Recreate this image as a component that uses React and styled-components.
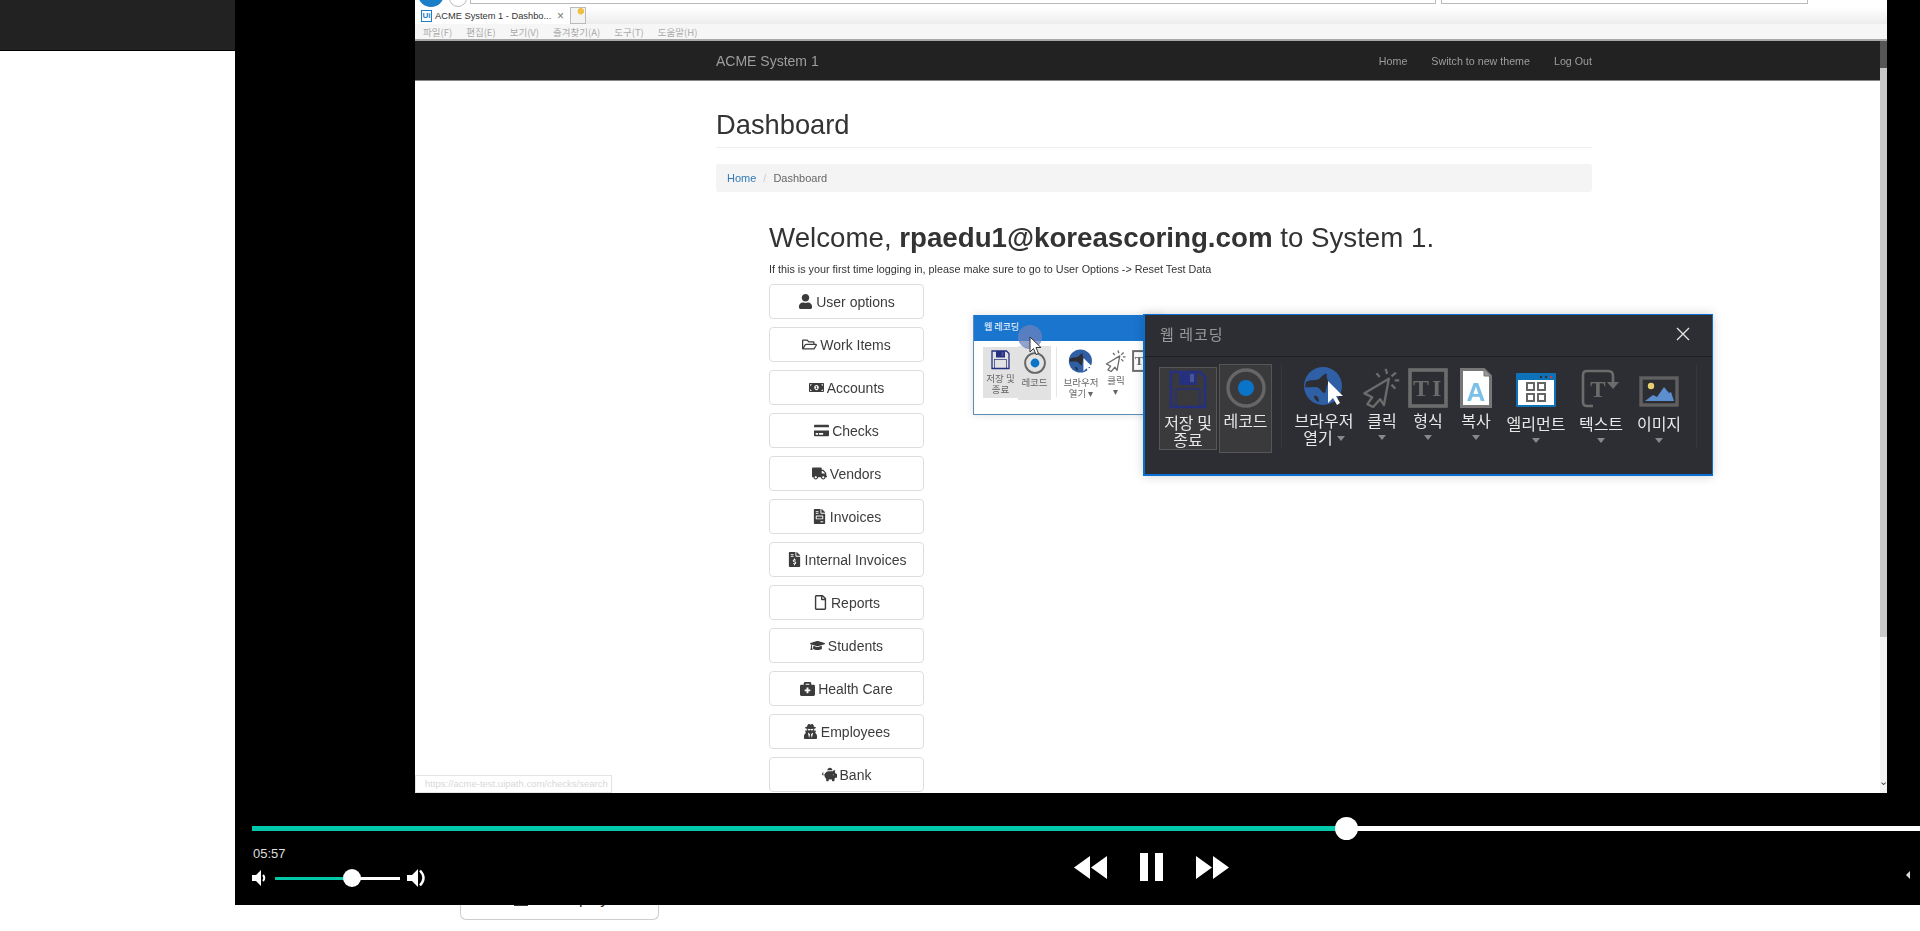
import React from 'react';
import styled, { createGlobalStyle } from 'styled-components';
import {
  FaUser, FaRegFolderOpen, FaMoneyBillAlt, FaCreditCard, FaTruck, FaFileInvoice,
  FaFileInvoiceDollar, FaRegFile, FaGraduationCap, FaBriefcaseMedical, FaUserSecret, FaPiggyBank, FaTv,
} from 'react-icons/fa';

const KR = '"Noto Sans CJK KR", "Liberation Sans", sans-serif';

const GlobalStyle = createGlobalStyle`
  html, body { margin: 0; padding: 0; background: #fff; overflow: hidden; }
  body { font-family: "Liberation Sans", Arial, sans-serif; }
  * { box-sizing: border-box; }
`;

const menuLinks = ['Home', 'Switch to new theme', 'Log Out'];
const ieMenu = ['파일(F)', '편집(E)', '보기(V)', '즐겨찾기(A)', '도구(T)', '도움말(H)'];

const navButtons = [
  { label: 'User options', Icon: FaUser },
  { label: 'Work Items', Icon: FaRegFolderOpen },
  { label: 'Accounts', Icon: FaMoneyBillAlt },
  { label: 'Checks', Icon: FaCreditCard },
  { label: 'Vendors', Icon: FaTruck },
  { label: 'Invoices', Icon: FaFileInvoice },
  { label: 'Internal Invoices', Icon: FaFileInvoiceDollar },
  { label: 'Reports', Icon: FaRegFile },
  { label: 'Students', Icon: FaGraduationCap },
  { label: 'Health Care', Icon: FaBriefcaseMedical },
  { label: 'Employees', Icon: FaUserSecret },
  { label: 'Bank', Icon: FaPiggyBank },
];

/* ---------- ribbon drawings ---------- */

const SaveIcon = ({ size = 38 }) => (
  <svg width={size} height={size * 39 / 38} viewBox="0 0 38 39">
    <path d="M2 2H31L36 7V37H2Z" fill="none" stroke="#25307f" strokeWidth="2.6" />
    <rect x="10" y="2" width="18" height="13" fill="#25307f" />
    <rect x="21" y="4" width="4" height="8" fill="#4a5499" />
    <rect x="7" y="19" width="24" height="18" fill="none" stroke="#25307f" strokeWidth="1.4" />
  </svg>
);

const RecordIcon = ({ size = 40 }) => (
  <svg width={size} height={size} viewBox="0 0 40 40">
    <circle cx="20" cy="20" r="18" fill="none" stroke="#666" strokeWidth="3.4" />
    <circle cx="20" cy="20" r="8" fill="#0a74c8" />
  </svg>
);

const GlobeIcon = ({ size = 46 }) => (
  <svg width={size} height={size * 40 / 46} viewBox="0 0 46 40" style={{ overflow: 'visible' }}>
    <circle cx="22" cy="18" r="19" fill="#2f5fa5" />
    <path d="M5 14C10 11 14 13 18 11C21 9 23 5 26 6C25 10 27 12 28 15C25 17 26 21 24 25C21 25 20 21 17 19.500C13 18 9 20 4 19Z" fill="#2d2e33" />
    <path d="M13 28C16 27 18 30 18 34C15 33 13 31 13 28Z" fill="#2d2e33" />
    <path d="M27 13V35L32 30L36 37L39 35L35 28L42 28Z" fill="#fff" />
  </svg>
);

const ClickIcon = ({ size = 40 }) => (
  <svg width={size} height={size} viewBox="0 0 40 41" fill="none" stroke="#6b6b6b">
    <path d="M27 11L2 26L10 30L5 37L11 40L18 32L22 38Z" strokeWidth="2.4" strokeLinejoin="round" />
    <path d="M23.7 1L25.3 6M34.3 4.7L29.7 8.7M37.7 12.7H33M33.7 21.3L29.7 17M14.3 5.3L17.7 9.3" strokeWidth="2.4" />
  </svg>
);

const FormatIcon = ({ size = 40 }) => (
  <svg width={size} height={size} viewBox="0 0 40 40">
    <rect x="2" y="2" width="36" height="36" fill="none" stroke="#6c6c6c" strokeWidth="3.6" />
    <text x="5" y="28" fontFamily="Liberation Serif" fontWeight="700" fontSize="24" fill="#6c6c6c">T</text>
    <text x="24" y="28" fontFamily="Liberation Serif" fontWeight="700" fontSize="24" fill="#6c6c6c">I</text>
  </svg>
);

const CopyIcon = ({ width = 32, height = 40 }) => (
  <svg width={width} height={height} viewBox="0 0 32 40">
    <path d="M1.5 1.5H24L30.5 8V38.5H1.5Z" fill="#fff" stroke="#777" strokeWidth="3" />
    <path d="M24 1.5V8H30.5" fill="#999" stroke="#777" strokeWidth="1" />
    <text x="16" y="33" textAnchor="middle" fontFamily="Liberation Sans" fontWeight="700" fontSize="26" fill="#7cc0e8">A</text>
  </svg>
);

const ElementIcon = () => (
  <svg width="40" height="40" viewBox="0 0 40 40">
    <rect x="0" y="5" width="40" height="34" rx="1" fill="#0e72b8" />
    <rect x="2" y="12" width="36" height="25" fill="#fff" />
    <circle cx="25" cy="9" r="1.2" fill="#333" />
    <circle cx="30" cy="9" r="1.2" fill="#333" />
    <circle cx="35" cy="9" r="1.2" fill="#d43a3a" />
    <g fill="none" stroke="#666" strokeWidth="2">
      <rect x="11" y="15" width="7" height="7" />
      <rect x="22" y="15" width="7" height="7" />
      <rect x="11" y="26" width="7" height="7" />
      <rect x="22" y="26" width="7" height="7" />
    </g>
  </svg>
);

const TextIcon = () => (
  <svg width="40" height="40" viewBox="0 0 40 40">
    <path d="M12 38H6Q2 38 2 34V7Q2 3 6 3H27Q32 3 32 8V15" fill="none" stroke="#6c6c6c" strokeWidth="2.6" />
    <path d="M26 14H38L32 21Z" fill="#6c6c6c" />
    <text x="17" y="29" textAnchor="middle" fontFamily="Liberation Serif" fontWeight="700" fontSize="23" fill="#6c6c6c">T</text>
  </svg>
);

const ImageIcon = () => (
  <svg width="40" height="40" viewBox="0 0 40 40">
    <rect x="2" y="10" width="36" height="27" fill="none" stroke="#606060" strokeWidth="3.4" />
    <circle cx="12" cy="18" r="3.2" fill="#e8d070" />
    <path d="M6 33L14 27L18 29L25 19L30 25L32 24L35 33Z" fill="#5b8fd0" />
  </svg>
);

/* ---------- player drawings ---------- */

const Rewind = () => (
  <svg width="33" height="23" viewBox="0 0 33 23"><path d="M16 0L0 11.5L16 23ZM33 0L17 11.5L33 23Z" fill="#fff" /></svg>
);
const Forward = () => (
  <svg width="33" height="23" viewBox="0 0 33 23"><path d="M0 0L16 11.5L0 23ZM17 0L33 11.5L17 23Z" fill="#fff" /></svg>
);
const Pause = () => (
  <svg width="23" height="28" viewBox="0 0 23 28"><path d="M0 0H8V28H0ZM15 0H23V28H15Z" fill="#fff" /></svg>
);
const VolumeLow = () => (
  <svg width="15" height="16" viewBox="0 0 15 16">
    <path d="M0 5H4L9 0V16L4 11H0Z" fill="#fff" />
    <path d="M11 5Q13.5 8 11 11" fill="none" stroke="#fff" strokeWidth="2" />
  </svg>
);
const VolumeHigh = () => (
  <svg width="20" height="18" viewBox="0 0 20 18">
    <path d="M0 6H5L11 0V18L5 12H0Z" fill="#fff" />
    <path d="M13 1.5Q20 9 13 16.5" fill="none" stroke="#fff" strokeWidth="2.4" />
  </svg>
);

const CursorArrow = () => (
  <svg width="14" height="20" viewBox="0 0 14 20">
    <path d="M1 1V16L4.5 12.5L7 18.5L9.5 17.5L7 11.5L12 11.5Z" fill="#fff" stroke="#333" strokeWidth="1" />
  </svg>
);

const ribbon = [
  { top: ['브라우저'], bottom: '열기', width: 74, Icon: GlobeIcon, inlineCaret: true },
  { top: ['클릭'], width: 42, Icon: ClickIcon },
  { top: ['형식'], width: 50, Icon: FormatIcon },
  { top: ['복사'], width: 46, Icon: CopyIcon },
  { top: ['엘리먼트'], width: 74, Icon: ElementIcon, low: true },
  { top: ['텍스트'], width: 56, Icon: TextIcon, low: true },
  { top: ['이미지'], width: 60, Icon: ImageIcon, low: true },
];

export default function App() {
  return (
    <>
      <GlobalStyle />
      <Page>
        <SideStub />
        <MainColumn>
          <Player>
            <VideoFrame>
              <Browser>
                <AddressRow>
                  <BackCircle />
                  <ForwardCircle />
                  <AddressBar />
                  <SearchBar />
                </AddressRow>
                <TabRow>
                  <Tab>
                    <TabLogo>Ui</TabLogo>
                    <TabTitle>ACME System 1 - Dashbo...</TabTitle>
                    <TabClose>×</TabClose>
                  </Tab>
                  <NewTab />
                </TabRow>
                <MenuRow>
                  {ieMenu.map(item => <MenuItem key={item}>{item}</MenuItem>)}
                </MenuRow>
                <SitePane>
                  <SiteScroller>
                    <SiteNav>
                      <Brand>ACME System 1</Brand>
                      <NavLinks>
                        {menuLinks.map(link => <NavLink key={link}>{link}</NavLink>)}
                      </NavLinks>
                    </SiteNav>
                    <Content>
                      <PageTitle>Dashboard</PageTitle>
                      <Breadcrumb>
                        <CrumbLink>Home</CrumbLink>
                        <CrumbSlash>/</CrumbSlash>
                        <CrumbCurrent>Dashboard</CrumbCurrent>
                      </Breadcrumb>
                      <WelcomeBlock>
                        <Welcome>Welcome, <b>rpaedu1@koreascoring.com</b> to System 1.</Welcome>
                        <Hint>If this is your first time logging in, please make sure to go to User Options -&gt; Reset Test Data</Hint>
                        <ButtonList>
                          {navButtons.map(({ label, Icon }) => (
                            <NavButton key={label}><Icon size={15} />{label}</NavButton>
                          ))}
                        </ButtonList>
                      </WelcomeBlock>
                    </Content>
                  </SiteScroller>
                  <Scrollbar>
                    <ScrollUp />
                    <ScrollThumb />
                    <ScrollTrack>⌄</ScrollTrack>
                  </Scrollbar>
                </SitePane>
              </Browser>

              <StatusUrl>https://acme-test.uipath.com/checks/search</StatusUrl>

              <LightWindow>
                <LightTitle>웹 레코딩</LightTitle>
                <LightBody>
                  <LightItem $width={35} $active>
                    <SaveIcon size={19} />
                    <LightLabel>저장 및<br />종료</LightLabel>
                  </LightItem>
                  <LightItem $width={33} $active $tall>
                    <RecordIcon size={22} />
                    <LightLabel>레코드</LightLabel>
                  </LightItem>
                  <LightDivider />
                  <LightItem $width={38}>
                    <GlobeIcon size={28} />
                    <LightLabel>브라우저<br />열기 ▾</LightLabel>
                  </LightItem>
                  <LightItem $width={32}>
                    <ClickIcon size={22} />
                    <LightLabel>클릭<br />▾</LightLabel>
                  </LightItem>
                  <LightItem $width={22}>
                    <FormatIcon size={22} />
                  </LightItem>
                </LightBody>
                <CursorHalo />
                <CursorSpot><CursorArrow /></CursorSpot>
              </LightWindow>

              <DarkWindow>
                <DarkTitleBar>
                  <DarkTitle>웹 레코딩</DarkTitle>
                  <CloseButton>
                    <svg width="14" height="14" viewBox="0 0 14 14">
                      <path d="M1 1L13 13M13 1L1 13" stroke="#e8e8e8" strokeWidth="1.3" />
                    </svg>
                  </CloseButton>
                </DarkTitleBar>
                <Toolbar>
                  <SaveTool>
                    <SaveIcon />
                    <ToolLabel>저장 및<br />종료</ToolLabel>
                  </SaveTool>
                  <RecordTool>
                    <IconSlot><RecordIcon /></IconSlot>
                    <ToolLabel>레코드</ToolLabel>
                  </RecordTool>
                  <ToolSep />
                  {ribbon.map(({ top, bottom, width, Icon, low, inlineCaret }) => (
                    <Tool key={top[0]} $width={width}>
                      <IconSlot $low={low}><Icon /></IconSlot>
                      <ToolLabel>{top[0]}</ToolLabel>
                      {inlineCaret ? (
                        <ToolLabel>{bottom}<InlineCaret /></ToolLabel>
                      ) : <Caret />}
                    </Tool>
                  ))}
                  <ToolSep $end />
                </Toolbar>
              </DarkWindow>
            </VideoFrame>

            <SeekBar>
              <SeekFill style={{ width: 1094 }} />
              <SeekRest />
              <SeekKnob style={{ left: 1083 }} />
            </SeekBar>

            <BottomRow>
              <LeftControls>
                <TimeLabel>05:57</TimeLabel>
                <VolumeRow>
                  <VolumeLow />
                  <VolumeTrack>
                    <VolumeFill style={{ width: 77 }} />
                    <VolumeKnob style={{ left: 68 }} />
                  </VolumeTrack>
                  <VolumeHigh />
                </VolumeRow>
              </LeftControls>
              <Transport>
                <Rewind />
                <Pause />
                <Forward />
              </Transport>
              <MoreArrow />
            </BottomRow>
          </Player>

          <PeekCard>
            <PeekInner><FaTv size={20} />Display</PeekInner>
          </PeekCard>
        </MainColumn>
      </Page>
    </>
  );
}

const Page = styled.div`
  display: flex;
  width: 1920px;
  height: 931px;
  overflow: hidden;
  background: #fff;
`;

const SideStub = styled.div`
  width: 235px;
  height: 51px;
  flex: none;
  background: #222;
  border-bottom: 1px solid #000;
`;

const MainColumn = styled.div`
  width: 1685px;
  display: flex;
  flex-direction: column;
`;

const Player = styled.div`
  width: 1685px;
  height: 905px;
  flex: none;
  background: #000;
  overflow: hidden;
  display: flex;
  flex-direction: column;
  padding-left: 17px;
`;

const VideoFrame = styled.div`
  position: relative;
  width: 1472px;
  height: 793px;
  flex: none;
  margin-left: 163px;
  background: #fff;
`;

const Browser = styled.div`
  width: 100%;
  height: 100%;
  display: flex;
  flex-direction: column;
  overflow: hidden;
  filter: blur(0.4px);
`;

const AddressRow = styled.div`
  height: 7px;
  flex: none;
  overflow: hidden;
  background: #fff;
  display: flex;
  align-items: flex-end;
  padding-left: 3px;
`;

const BackCircle = styled.div`
  width: 26px;
  height: 26px;
  flex: none;
  border-radius: 50%;
  background: #1a7ec8;
`;

const ForwardCircle = styled.div`
  width: 18px;
  height: 18px;
  flex: none;
  margin-left: 5px;
  border-radius: 50%;
  border: 1px solid #bbb;
  background: #fff;
`;

const AddressBar = styled.div`
  width: 966px;
  height: 4px;
  flex: none;
  align-self: flex-start;
  margin-left: 3px;
  background: #fff;
  border: 1px solid #bbb;
  border-top: none;
`;

const SearchBar = styled.div`
  width: 367px;
  height: 4px;
  flex: none;
  align-self: flex-start;
  margin-left: 5px;
  background: #fff;
  border: 1px solid #bbb;
  border-top: none;
`;

const TabRow = styled.div`
  height: 17px;
  flex: none;
  display: flex;
  align-items: flex-end;
  background: linear-gradient(#fff, #ececec);
`;

const Tab = styled.div`
  width: 155px;
  height: 17px;
  padding-left: 6px;
  display: flex;
  align-items: center;
  background: #fff;
`;

const TabLogo = styled.div`
  width: 11px;
  height: 12px;
  flex: none;
  font-size: 8px;
  line-height: 10px;
  text-align: center;
  color: #1a7ec8;
  font-weight: 700;
  border: 1px solid #1a7ec8;
`;

const TabTitle = styled.span`
  margin-left: 3px;
  width: 116px;
  flex: none;
  font-size: 9.300px;
  color: #333;
  white-space: nowrap;
`;

const TabClose = styled.span`
  margin-left: 6px;
  font-size: 12px;
  line-height: 12px;
  color: #777;
`;

const NewTab = styled.div`
  width: 16px;
  height: 17px;
  background: radial-gradient(circle at 70% 22%, #f0c040 0 3px, #f3f3f3 3.5px);
  border: 1px solid #bbb;
`;

const MenuRow = styled.div`
  height: 17px;
  flex: none;
  display: flex;
  align-items: center;
  gap: 14px;
  padding: 1px 0 0 8px;
  background: #f6f6f6;
  border-bottom: 2px solid #a8a8a8;
`;

const MenuItem = styled.span`
  font-family: ${KR};
  font-size: 9.500px;
  color: #aaa;
  white-space: nowrap;
`;

const SitePane = styled.div`
  flex: 1;
  min-height: 0;
  display: flex;
`;

const SiteScroller = styled.div`
  width: 1465px;
  flex: none;
  display: flex;
  flex-direction: column;
  overflow: hidden;
`;

const SiteNav = styled.div`
  height: 40px;
  flex: none;
  display: flex;
  align-items: center;
  justify-content: space-between;
  padding: 0 288px 0 301px;
  background: #222;
  border-bottom: 1px solid #888;
`;

const Brand = styled.span`
  font-size: 14px;
  color: #9d9d9d;
`;

const NavLinks = styled.div`
  display: flex;
  gap: 24px;
`;

const NavLink = styled.span`
  font-size: 10.700px;
  color: #9d9d9d;
`;

const Content = styled.div`
  width: 876px;
  margin-left: 301px;
  display: flex;
  flex-direction: column;
`;

const PageTitle = styled.h1`
  margin: 29px 0 0;
  padding-bottom: 7px;
  font-size: 27.300px;
  line-height: 30px;
  font-weight: 400;
  color: #333;
  border-bottom: 1px solid #eee;
`;

const Breadcrumb = styled.div`
  margin-top: 16px;
  height: 28px;
  display: flex;
  align-items: center;
  padding-left: 11px;
  font-size: 11px;
  background: #f4f4f4;
  border-radius: 3px;
`;

const CrumbLink = styled.span`
  color: #337ab7;
`;

const CrumbSlash = styled.span`
  margin: 0 7px;
  color: #ccc;
`;

const CrumbCurrent = styled.span`
  color: #666;
`;

const WelcomeBlock = styled.div`
  padding-left: 53px;
`;

const Welcome = styled.div`
  margin-top: 31px;
  font-size: 27.700px;
  line-height: 30px;
  color: #333;
  white-space: nowrap;
`;

const Hint = styled.div`
  margin-top: 9px;
  font-size: 10.800px;
  line-height: 14px;
  color: #333;
  white-space: nowrap;
`;

const ButtonList = styled.div`
  margin-top: 8px;
  display: flex;
  flex-direction: column;
  gap: 8px;
`;

const NavButton = styled.div`
  width: 155px;
  height: 35px;
  flex: none;
  display: flex;
  align-items: center;
  justify-content: center;
  gap: 3px;
  font-size: 14px;
  color: #3c3c3c;
  background: #fff;
  border: 1px solid #ddd;
  border-radius: 4px;
`;

const Scrollbar = styled.div`
  width: 7px;
  flex: none;
  display: flex;
  flex-direction: column;
`;

const ScrollUp = styled.div`
  height: 27px;
  flex: none;
  background: #555;
`;

const ScrollThumb = styled.div`
  height: 569px;
  flex: none;
  background: #c8c8c8;
`;

const ScrollTrack = styled.div`
  flex: 1;
  background: #f3f3f3;
  display: flex;
  align-items: flex-end;
  justify-content: center;
  padding-bottom: 8px;
  font-size: 11px;
  line-height: 8px;
  color: #444;
`;

const StatusUrl = styled.div`
  position: absolute;
  left: 0;
  bottom: 0;
  width: 197px;
  height: 18px;
  padding-left: 9px;
  font-size: 9.500px;
  line-height: 16px;
  color: #d8d8d8;
  background: #fff;
  border: 1px solid #e4e4e4;
  white-space: nowrap;
`;

const LightWindow = styled.div`
  position: absolute;
  left: 558px;
  top: 315px;
  width: 190px;
  height: 100px;
  background: #fff;
  border: 1px solid #5b8db8;
  border-top: none;
  box-shadow: 0 0 8px rgba(0, 0, 0, 0.12);
`;

const LightTitle = styled.div`
  height: 26px;
  padding: 6px 0 0 10px;
  font-family: ${KR};
  font-size: 9px;
  line-height: 12px;
  color: #fff;
  background: #1a75cf;
`;

const LightBody = styled.div`
  display: flex;
  align-items: flex-start;
  padding: 6px 0 0 9px;
`;

const LightItem = styled.div`
  width: ${p => p.$width}px;
  height: ${p => (p.$tall ? 54 : 51)}px;
  flex: none;
  display: flex;
  flex-direction: column;
  align-items: center;
  padding-top: ${p => (p.$tall ? 6 : 3)}px;
  margin-top: ${p => (p.$tall ? -1 : 0)}px;
  background: ${p => (p.$active ? '#e2e2e2' : 'transparent')};
`;

const LightLabel = styled.div`
  margin-top: 3px;
  font-family: ${KR};
  font-size: 9.500px;
  line-height: 11px;
  color: #666;
  text-align: center;
  white-space: nowrap;
`;

const LightDivider = styled.div`
  width: 1px;
  height: 50px;
  flex: none;
  margin: 0 5px 0 5px;
  background: #e6e6e6;
`;

const CursorHalo = styled.div`
  position: absolute;
  left: 44px;
  top: 10px;
  width: 24px;
  height: 24px;
  border-radius: 50%;
  background: rgba(110, 130, 190, 0.75);
`;

const CursorSpot = styled.div`
  position: absolute;
  left: 55px;
  top: 21px;
  line-height: 0;
`;

const DarkWindow = styled.div`
  position: absolute;
  left: 728px;
  top: 314px;
  width: 570px;
  height: 162px;
  display: flex;
  flex-direction: column;
  background: #2d2e33;
  border: 1px solid #0a6fd0;
  border-width: 1px 1px 2px 2px;
  box-shadow: 0 0 10px rgba(0, 0, 0, 0.18);
`;

const DarkTitleBar = styled.div`
  height: 42px;
  flex: none;
  display: flex;
  align-items: center;
  justify-content: space-between;
  padding: 0 22px 4px 15px;
  border-bottom: 1px solid #1f1f22;
`;

const DarkTitle = styled.span`
  font-family: ${KR};
  font-size: 15px;
  letter-spacing: 1px;
  color: #9a9a9a;
`;

const CloseButton = styled.div`
  line-height: 0;
`;

const Toolbar = styled.div`
  display: flex;
  align-items: flex-start;
  padding: 7px 0 0 14px;
`;

const SaveTool = styled.div`
  width: 58px;
  height: 83px;
  flex: none;
  margin-top: 3px;
  padding-top: 2px;
  display: flex;
  flex-direction: column;
  align-items: center;
  gap: 5px;
  background: #3a3a3c;
  border: 1px solid #565656;
`;

const RecordTool = styled.div`
  width: 53px;
  height: 89px;
  flex: none;
  margin-left: 2px;
  padding-top: 3px;
  display: flex;
  flex-direction: column;
  align-items: center;
  background: #3a3a3c;
  border: 1px solid #565656;
`;

const ToolSep = styled.div`
  width: 1px;
  height: 84px;
  flex: none;
  margin: 0 ${p => (p.$end ? 0 : 5)}px 0 ${p => (p.$end ? 7 : 9)}px;
  background: #36373c;
`;

const Tool = styled.div`
  width: ${p => p.$width}px;
  flex: none;
  padding-top: 4px;
  display: flex;
  flex-direction: column;
  align-items: center;
`;

const IconSlot = styled.div`
  height: ${p => (p.$low ? 47 : 44)}px;
  display: flex;
  align-items: flex-start;
  justify-content: center;
`;

const ToolLabel = styled.div`
  font-family: ${KR};
  font-size: 16px;
  line-height: 17px;
  color: #e8e8e8;
  text-align: center;
  white-space: nowrap;
`;

const Caret = styled.div`
  width: 0;
  height: 0;
  margin-top: 6px;
  border-left: 4px solid transparent;
  border-right: 4px solid transparent;
  border-top: 5px solid #888;
`;

const InlineCaret = styled(Caret)`
  display: inline-block;
  margin: 0 0 2px 4px;
  vertical-align: middle;
`;

const SeekBar = styled.div`
  position: relative;
  width: 1668px;
  height: 23px;
  flex: none;
  margin-top: 24px;
  display: flex;
  align-items: center;
`;

const SeekFill = styled.div`
  height: 5px;
  flex: none;
  background: #00c8a8;
`;

const SeekRest = styled.div`
  height: 5px;
  flex: 1;
  background: #fff;
`;

const SeekKnob = styled.div`
  position: absolute;
  top: 0;
  width: 23px;
  height: 23px;
  border-radius: 50%;
  background: #fff;
`;

const BottomRow = styled.div`
  margin-top: 6px;
  display: flex;
  align-items: flex-start;
`;

const LeftControls = styled.div`
  width: 175px;
  flex: none;
  display: flex;
  flex-direction: column;
`;

const TimeLabel = styled.div`
  font-size: 13px;
  line-height: 16px;
  color: #ddd;
  padding-left: 1px;
`;

const VolumeRow = styled.div`
  margin-top: 7px;
  height: 18px;
  display: flex;
  align-items: center;
  gap: 8px;
`;

const VolumeTrack = styled.div`
  position: relative;
  width: 125px;
  height: 3px;
  flex: none;
  margin-right: -1px;
  background: #fff;
`;

const VolumeFill = styled.div`
  height: 3px;
  background: #00c8a8;
`;

const VolumeKnob = styled.div`
  position: absolute;
  top: -8px;
  width: 18px;
  height: 18px;
  border-radius: 50%;
  background: #fff;
`;

const Transport = styled.div`
  margin: 7px 0 0 647px;
  height: 28px;
  display: flex;
  align-items: center;
  gap: 33px;
`;

const MoreArrow = styled.div`
  width: 0;
  height: 0;
  margin: 25px 10px 0 auto;
  border-top: 4px solid transparent;
  border-bottom: 4px solid transparent;
  border-right: 4px solid #ddd;
`;

const PeekCard = styled.div`
  width: 199px;
  height: 15px;
  flex: none;
  margin-left: 225px;
  overflow: hidden;
  background: #fff;
  border: 1px solid #ccc;
  border-top: none;
  border-radius: 0 0 6px 6px;
`;

const PeekInner = styled.div`
  margin-top: -15px;
  height: 18px;
  display: flex;
  align-items: flex-end;
  justify-content: center;
  gap: 25px;
  font-size: 16px;
  line-height: 18px;
  color: #333;
`;
